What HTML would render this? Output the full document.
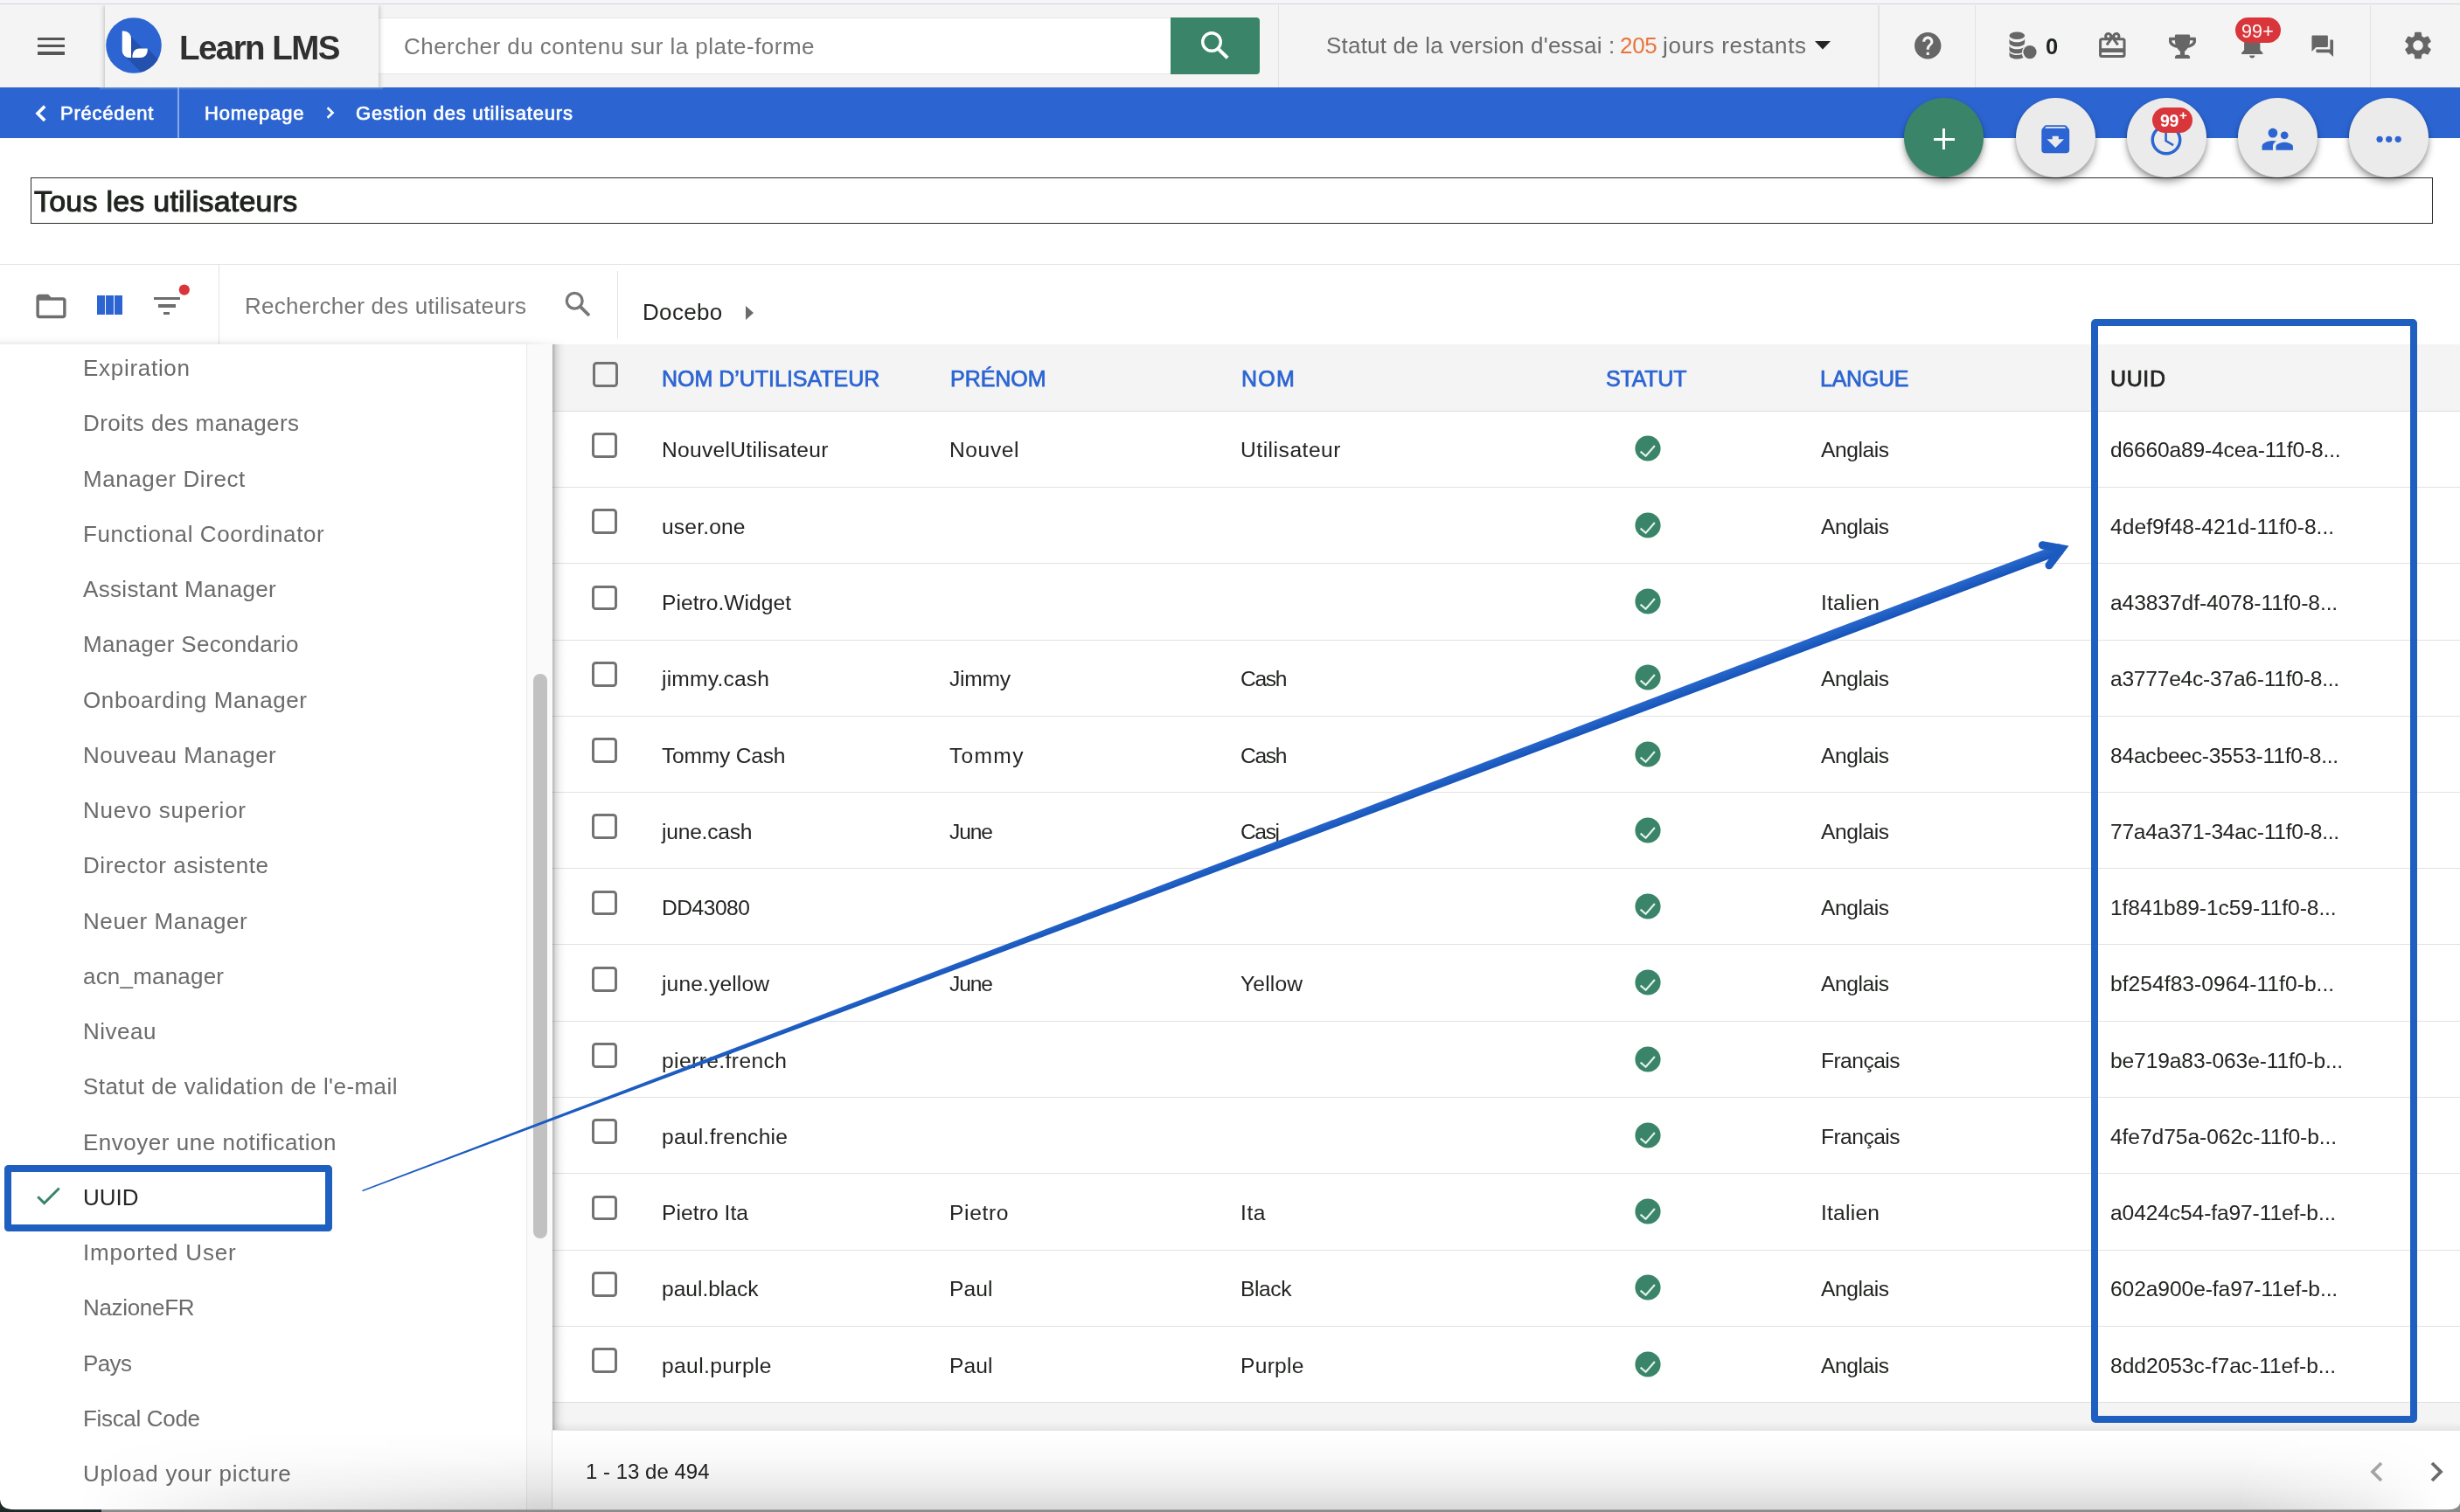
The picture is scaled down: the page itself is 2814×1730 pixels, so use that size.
<!DOCTYPE html>
<html><head><meta charset="utf-8"><title>Gestion des utilisateurs</title>
<style>
html,body{margin:0;padding:0;}
body{width:2814px;height:1730px;overflow:hidden;position:relative;background:#fff;font-family:"Liberation Sans", sans-serif;}
.t{will-change:transform;position:absolute;white-space:nowrap;font-family:"Liberation Sans", sans-serif;}
svg{display:block;overflow:visible;}
</style></head><body>

<div style="position:absolute;left:0.00px;top:0.00px;width:2814.00px;height:100.00px;background:#f4f4f4;"></div>
<div style="position:absolute;left:0.00px;top:0.00px;width:2814.00px;height:4.00px;background:#f5f5f8;"></div>
<div style="position:absolute;left:0.00px;top:4.00px;width:2814.00px;height:1.00px;background:#d4d4d8;"></div>
<div style="position:absolute;left:43.00px;top:42.50px;width:31.00px;height:3.60px;background:#555;"></div>
<div style="position:absolute;left:43.00px;top:50.80px;width:31.00px;height:3.60px;background:#555;"></div>
<div style="position:absolute;left:43.00px;top:59.10px;width:31.00px;height:3.60px;background:#555;"></div>
<div style="position:absolute;left:432.50px;top:21.00px;width:907.00px;height:62.80px;background:#fff;box-shadow:0 0 0 1px #e6e6e6;"></div>
<div style="position:absolute;left:100px;top:5.5px;width:360px;height:94.5px;overflow:hidden"><div style="position:absolute;left:19.5px;top:0;width:313px;height:110px;background:#f4f4f4;box-shadow:0 0 6px rgba(0,0,0,.30)"></div></div>
<svg style="position:absolute;left:121.00px;top:20.00px;" width="64.00" height="64.00" viewBox="0 0 64 64">
<defs><clipPath id="lc"><circle cx="32" cy="32" r="31.8"/></clipPath></defs>
<circle cx="32" cy="32" r="31.8" fill="#2c65d2"/>
<g clip-path="url(#lc)"><path d="M28 21 L42.4 35.4 L47.75 35.4 L87.75 75.4 L70.25 92.5 L20.25 42.5 Z" fill="#2451ad"/></g>
<path d="M18.75 15.4 H21 A8 8.6 0 0 1 29 24 V46 H26.75 A8 8 0 0 1 18.75 38 Z" fill="#fff"/>
<path d="M30.5 46 V43.4 A8 8 0 0 1 38.5 35.4 H47.75 V38 A8 8 0 0 1 39.75 46 Z" fill="#fff"/>
</svg>
<div class="t" style="left:204.60px;top:36px;font-size:38.5px;line-height:38px;font-weight:700;color:#303030;letter-spacing:-1.552px;">Learn LMS</div>
<div class="t" style="left:462.00px;top:40px;font-size:26px;line-height:26px;font-weight:400;color:#767676;letter-spacing:0.463px;">Chercher du contenu sur la plate-forme</div>
<div style="position:absolute;left:1339.00px;top:20.00px;width:102.00px;height:65.00px;background:#3a8569;border-radius:0 4px 4px 0;"></div>
<svg style="position:absolute;left:1371.00px;top:33.50px;" width="36.00" height="36.00" viewBox="0 0 36 36"><circle cx="15" cy="14" r="10.3" fill="none" stroke="#fff" stroke-width="3.4"/><path d="M22.3 21.6 L33.2 32.2" stroke="#fff" stroke-width="4" fill="none"/></svg>
<div style="position:absolute;left:1461.75px;top:5.50px;width:1.50px;height:94.50px;background:#e2e2e2;"></div>
<div style="position:absolute;left:2148.25px;top:5.50px;width:1.50px;height:94.50px;background:#e2e2e2;"></div>
<div style="position:absolute;left:2258.75px;top:5.50px;width:1.50px;height:94.50px;background:#e2e2e2;"></div>
<div style="position:absolute;left:2710.75px;top:5.50px;width:1.50px;height:94.50px;background:#e2e2e2;"></div>
<div class="t" style="left:1517.00px;top:39px;font-size:26px;line-height:26px;font-weight:400;color:#6b6b6b;letter-spacing:0.204px;">Statut de la version d&#39;essai :</div>
<div class="t" style="left:1853.00px;top:39px;font-size:26px;line-height:26px;font-weight:400;color:#e8743b;letter-spacing:-0.3px;">205</div>
<div class="t" style="left:1902.00px;top:39px;font-size:26px;line-height:26px;font-weight:400;color:#6b6b6b;letter-spacing:0.609px;">jours restants</div>
<svg style="position:absolute;left:2076.00px;top:47.00px;" width="18.00" height="9.50" viewBox="0 0 18 9.5"><path d="M0 0 H18 L9 9.5 Z" fill="#222522"/></svg>
<svg style="position:absolute;left:2186.75px;top:33.75px;" width="36.50" height="36.50" viewBox="0 0 24 24"><path fill="#666666" d="M12 2C6.48 2 2 6.48 2 12s4.48 10 10 10 10-4.48 10-10S17.52 2 12 2zm1 17h-2v-2h2v2zm2.07-7.75l-.9.92C13.45 12.9 13 13.5 13 15h-2v-.5c0-1.1.45-2.1 1.17-2.83l1.24-1.26c.37-.36.59-.86.59-1.41 0-1.1-.9-2-2-2s-2 .9-2 2H8c0-2.21 1.79-4 4-4s4 1.79 4 4c0 .88-.36 1.68-.93 2.25z"/></svg>
<svg style="position:absolute;left:2297.80px;top:35.80px;" width="32.00" height="32.00" viewBox="0 0 32 32">
<g fill="#666666">
<ellipse cx="9.3" cy="4.8" rx="8.8" ry="4.3"/>
<path d="M0.5 8 v5 c0 2.4 3.9 4.3 8.8 4.3 s8.8 -1.9 8.8 -4.3 v-5 c0 2.4 -3.9 4.3 -8.8 4.3 s-8.8 -1.9 -8.8 -4.3z"/>
<path d="M0.5 16 v5 c0 2.4 3.9 4.3 8.8 4.3 c2.2 0 4.2 -.4 5.8 -1 c-.3 -3 .9 -5.6 3 -7.3 v-1 c0 2.4 -3.9 4.3 -8.8 4.3 s-8.8 -1.9 -8.8 -4.3z"/>
<path d="M0.5 24 v3.2 c0 2.4 3.9 4.3 8.8 4.3 c3 0 5.6 -.7 7.2 -1.8 c-.9 -1 -1.4 -2.3 -1.6 -3.7 c-1.6 .6 -3.5 1 -5.6 1 c-4.9 0 -8.8 -1.9 -8.8 -4.3z"/>
<circle cx="24" cy="23.6" r="7.6"/>
</g></svg>
<div class="t" style="left:2339.80px;top:40px;font-size:25.5px;line-height:26px;font-weight:700;color:#1f231f;letter-spacing:0px;">0</div>
<svg style="position:absolute;left:2397.70px;top:34.10px;" width="36.60" height="36.60" viewBox="0 0 24 24"><path fill="#666666" d="M20 6h-2.18c.11-.31.18-.65.18-1 0-1.66-1.34-3-3-3-1.05 0-1.96.54-2.5 1.35l-.5.67-.5-.68C10.96 2.54 10.05 2 9 2 7.34 2 6 3.34 6 5c0 .35.07.69.18 1H4c-1.11 0-1.99.89-1.99 2L2 19c0 1.11.89 2 2 2h16c1.11 0 2-.89 2-2V8c0-1.11-.89-2-2-2zm-5-2c.55 0 1 .45 1 1s-.45 1-1 1-1-.45-1-1 .45-1 1-1zM9 4c.55 0 1 .45 1 1s-.45 1-1 1-1-.45-1-1 .45-1 1-1zm11 15H4v-2h16v2zm0-5H4V8h5.08L7 10.83 8.62 12 11 8.76l1-1.36 1 1.36L15.38 12 17 10.83 14.92 8H20v6z"/></svg>
<svg style="position:absolute;left:2480.60px;top:38.50px;" width="31.00" height="28.40" viewBox="0 0 576 512"><path fill="#666666" d="M552 64H448V24c0-13.3-10.7-24-24-24H152c-13.3 0-24 10.7-24 24v40H24C10.7 64 0 74.7 0 88v56c0 35.7 22.5 72.4 61.9 100.7 31.5 22.7 69.8 37.1 110 41.7C203.3 338.5 240 360 240 360v72h-48c-35.3 0-64 20.7-64 56v12c0 6.6 5.4 12 12 12h296c6.6 0 12-5.4 12-12v-12c0-35.3-28.7-56-64-56h-48v-72s36.7-21.5 68.1-73.6c40.3-4.6 78.6-19 110-41.7 39.3-28.3 61.9-65 61.9-100.7V88c0-13.3-10.7-24-24-24zM99.3 192.8C74.9 175.2 64 155.6 64 144v-16h64.2c1 32.6 5.8 61.2 12.8 86.200-15.100-5.200-29.200-12.400-41.700-21.400zM512 144c0 16.100-17.700 36.100-35.300 48.800-12.500 9-26.700 16.200-41.800 21.400 7-25 11.800-53.600 12.800-86.200H512v16z"/></svg>
<svg style="position:absolute;left:2557.75px;top:33.25px;" width="36.50" height="36.50" viewBox="0 0 24 24"><path fill="#666666" d="M12 22c1.1 0 2-.9 2-2h-4c0 1.1.89 2 2 2zm6-6v-5c0-3.07-1.64-5.64-4.5-6.32V4c0-.83-.67-1.5-1.5-1.5s-1.5.67-1.5 1.5v.68C7.63 5.36 6 7.92 6 11v5l-2 2v1h16v-1l-2-2z"/></svg>
<svg style="position:absolute;left:2641.55px;top:37.75px;" width="29.50" height="29.50" viewBox="0 0 24 24"><path fill="#666666" d="M21 6h-2v9H6v2c0 .55.45 1 1 1h11l4 4V7c0-.55-.45-1-1-1zm-4 6V3c0-.55-.45-1-1-1H3c-.55 0-1 .45-1 1v14l4-4h10c.55 0 1-.45 1-1z"/></svg>
<svg style="position:absolute;left:2747.00px;top:33.00px;" width="38.00" height="38.00" viewBox="0 0 24 24"><path fill="#666666" d="M19.14 12.94c.04-.3.06-.61.06-.94 0-.32-.02-.64-.07-.94l2.03-1.58c.18-.14.23-.41.12-.61l-1.92-3.32c-.12-.22-.37-.29-.59-.22l-2.39.96c-.5-.38-1.03-.7-1.62-.94l-.36-2.54c-.04-.24-.24-.41-.48-.41h-3.84c-.24 0-.43.17-.47.41l-.36 2.54c-.59.24-1.13.57-1.62.94l-2.39-.96c-.22-.08-.47 0-.59.22L2.74 8.87c-.12.21-.08.47.12.61l2.03 1.58c-.05.3-.09.63-.09.94s.02.64.07.94l-2.03 1.58c-.18.14-.23.41-.12.61l1.92 3.32c.12.22.37.29.59.22l2.39-.96c.5.38 1.03.7 1.62.94l.36 2.54c.05.24.24.41.48.41h3.84c.24 0 .44-.17.47-.41l.36-2.54c.59-.24 1.13-.56 1.62-.94l2.39.96c.22.08.47 0 .59-.22l1.92-3.32c.12-.22.07-.47-.12-.61l-2.01-1.58zM12 15.6c-1.98 0-3.6-1.62-3.6-3.6s1.62-3.6 3.6-3.6 3.6 1.62 3.6 3.6-1.62 3.6-3.6 3.6z"/></svg>
<div style="position:absolute;left:2557.00px;top:20.00px;width:52.00px;height:29.00px;background:#d9363c;border-radius:15px;"></div>
<div class="t" style="left:2564.00px;top:25px;font-size:21.5px;line-height:22px;font-weight:400;color:#fff;letter-spacing:0.15px;">99+</div>
<div style="position:absolute;left:0.00px;top:100.00px;width:2814.00px;height:57.60px;background:#2c65d2;"></div>
<div style="position:absolute;left:114.00px;top:100.00px;width:324.00px;height:2.50px;background:linear-gradient(rgba(210,210,210,.35),rgba(210,210,210,0));"></div>
<svg style="position:absolute;left:40.00px;top:119.50px;" width="13.50" height="19.50" viewBox="0 0 13.5 19.5"><path d="M11.2 1.6 L3 9.75 L11.2 17.9" fill="none" stroke="#fff" stroke-width="3.6"/></svg>
<div class="t" style="left:69.00px;top:119px;font-size:22px;line-height:22px;font-weight:400;color:#fff;letter-spacing:0.750px;-webkit-text-stroke:0.7px #fff;">Précédent</div>
<div style="position:absolute;left:203.00px;top:100.00px;width:2.00px;height:57.60px;background:#86a9e8;"></div>
<div class="t" style="left:234.30px;top:119px;font-size:22px;line-height:22px;font-weight:400;color:#fff;letter-spacing:0.837px;-webkit-text-stroke:0.7px #fff;">Homepage</div>
<svg style="position:absolute;left:372.50px;top:122.00px;" width="9.50" height="14.00" viewBox="0 0 9.5 14"><path d="M1.6 1.2 L7.6 7 L1.6 12.8" fill="none" stroke="#fff" stroke-width="2.6"/></svg>
<div class="t" style="left:407.00px;top:119px;font-size:22px;line-height:22px;font-weight:400;color:#fff;letter-spacing:0.840px;-webkit-text-stroke:0.7px #fff;">Gestion des utilisateurs</div>
<div style="position:absolute;left:35.00px;top:203.00px;width:2748.00px;height:52.60px;border:1.1px solid #2a2d2a;box-sizing:border-box;"></div>
<div class="t" style="left:39.00px;top:213px;font-size:34px;line-height:34px;font-weight:400;color:#20241f;letter-spacing:0.231px;-webkit-text-stroke:1.05px #20241f;">Tous les utilisateurs</div>
<div style="position:absolute;left:2178.20px;top:111.90px;width:90.80px;height:90.80px;background:#3a8569;border-radius:50%;box-shadow:0 6px 9px rgba(0,0,0,.30),0 2px 4px rgba(0,0,0,.18);"></div>
<div style="position:absolute;left:2306.10px;top:111.90px;width:90.80px;height:90.80px;background:#ebebeb;border-radius:50%;box-shadow:0 6px 9px rgba(0,0,0,.30),0 2px 4px rgba(0,0,0,.18);"></div>
<div style="position:absolute;left:2433.10px;top:111.90px;width:90.80px;height:90.80px;background:#ebebeb;border-radius:50%;box-shadow:0 6px 9px rgba(0,0,0,.30),0 2px 4px rgba(0,0,0,.18);"></div>
<div style="position:absolute;left:2560.00px;top:111.90px;width:90.80px;height:90.80px;background:#ebebeb;border-radius:50%;box-shadow:0 6px 9px rgba(0,0,0,.30),0 2px 4px rgba(0,0,0,.18);"></div>
<div style="position:absolute;left:2687.00px;top:111.90px;width:90.80px;height:90.80px;background:#ebebeb;border-radius:50%;box-shadow:0 6px 9px rgba(0,0,0,.30),0 2px 4px rgba(0,0,0,.18);"></div>
<div style="position:absolute;left:2212.00px;top:157.60px;width:23.60px;height:3.30px;background:#fff;"></div>
<div style="position:absolute;left:2222.10px;top:147.40px;width:3.30px;height:23.60px;background:#fff;"></div>
<svg style="position:absolute;left:2330.05px;top:137.75px;" width="42.50" height="42.50" viewBox="0 0 24 24"><path fill="#2c65d2" d="M20.54 5.23l-1.39-1.68C18.88 3.21 18.47 3 18 3H6c-.47 0-.88.21-1.16.55L3.46 5.23C3.17 5.57 3 6.02 3 6.5V19c0 1.1.9 2 2 2h14c1.1 0 2-.9 2-2V6.5c0-.48-.17-.93-.46-1.27zM12 17.5L6.5 12H10v-2h4v2h3.5L12 17.5zM5.12 5l.81-1h12l.94 1H5.12z"/></svg>
<svg style="position:absolute;left:2457.20px;top:138.80px;" width="42.00" height="42.00" viewBox="0 0 24 24"><path fill="#2c65d2" d="M11.99 2C6.47 2 2 6.48 2 12s4.47 10 9.99 10C17.52 22 22 17.52 22 12S17.52 2 11.99 2zM12 20c-4.42 0-8-3.58-8-8s3.58-8 8-8 8 3.58 8 8-3.58 8-8 8zm.5-13H11v6l5.25 3.15.75-1.23-4.5-2.67z"/></svg>
<svg style="position:absolute;left:2584.25px;top:138.25px;" width="42.50" height="42.50" viewBox="0 0 24 24"><path fill="#2c65d2" d="M16.5 12c1.38 0 2.49-1.12 2.49-2.5S17.88 7 16.5 7C15.12 7 14 8.12 14 9.5s1.12 2.5 2.5 2.5zM9 11c1.66 0 2.99-1.34 2.99-3S10.66 5 9 5C7.34 5 6 6.34 6 8s1.34 3 3 3zm7.5 3c-1.83 0-5.5.92-5.5 2.75V19h11v-2.25c0-1.83-3.67-2.75-5.5-2.75zM9 13c-2.33 0-7 1.17-7 3.5V19h7v-2.25c0-.85.33-2.34 2.37-3.47C10.5 13.1 9.66 13 9 13z"/></svg>
<svg style="position:absolute;left:2715.00px;top:152.00px;" width="36.00" height="15.00" viewBox="0 0 36 15"><g fill="#2c65d2"><circle cx="7.1" cy="7.3" r="3.6"/><circle cx="17.7" cy="7.3" r="3.6"/><circle cx="28.2" cy="7.3" r="3.6"/></g></svg>
<div style="position:absolute;left:2462.00px;top:123.00px;width:46.00px;height:29.00px;background:#d9363c;border-radius:15px;"></div>
<div class="t" style="left:2471.00px;top:128px;font-size:19.5px;line-height:20px;font-weight:700;color:#fff;letter-spacing:-0.4px;">99</div>
<div class="t" style="left:2493.30px;top:124px;font-size:15px;line-height:15px;font-weight:700;color:#fff;letter-spacing:0px;">+</div>
<div style="position:absolute;left:0.00px;top:301.60px;width:2814.00px;height:1.60px;background:#e3e3e3;"></div>
<svg style="position:absolute;left:37.50px;top:329.50px;" width="41.00" height="41.00" viewBox="0 0 24 24"><path fill="#6e6e6e" d="M20 6h-8l-2-2H4c-1.1 0-1.99.9-1.99 2L2 18c0 1.1.9 2 2 2h16c1.1 0 2-.9 2-2V8c0-1.1-.9-2-2-2zm0 12H4V8h16v10z"/></svg>
<div style="position:absolute;left:110.80px;top:338.20px;width:8.90px;height:21.80px;background:#2c65d2;"></div>
<div style="position:absolute;left:120.90px;top:338.20px;width:8.90px;height:21.80px;background:#2c65d2;"></div>
<div style="position:absolute;left:131.00px;top:338.20px;width:8.90px;height:21.80px;background:#2c65d2;"></div>
<div style="position:absolute;left:176.00px;top:340.00px;width:30.00px;height:3.20px;background:#6e6e6e;"></div>
<div style="position:absolute;left:181.00px;top:348.40px;width:20.00px;height:3.20px;background:#6e6e6e;"></div>
<div style="position:absolute;left:187.30px;top:357.00px;width:7.20px;height:3.20px;background:#6e6e6e;"></div>
<svg style="position:absolute;left:203.00px;top:324.00px;" width="16.00" height="16.00" viewBox="0 0 16 16"><circle cx="7.8" cy="7.6" r="6.1" fill="#d9363c"/></svg>
<div style="position:absolute;left:249.60px;top:303.00px;width:1.40px;height:91.00px;background:#e3e3e3;"></div>
<div class="t" style="left:280.00px;top:337px;font-size:26px;line-height:26px;font-weight:400;color:#767676;letter-spacing:0.267px;">Rechercher des utilisateurs</div>
<svg style="position:absolute;left:646.00px;top:333.00px;" width="30.00" height="30.00" viewBox="0 0 30 30"><circle cx="11.2" cy="11.2" r="8.9" fill="none" stroke="#777" stroke-width="3.3"/><path d="M17.6 17.6 L28 28" stroke="#777" stroke-width="3.8" fill="none"/></svg>
<div style="position:absolute;left:705.80px;top:310.00px;width:1.40px;height:77.00px;background:#e3e3e3;"></div>
<div class="t" style="left:735.00px;top:344px;font-size:26px;line-height:26px;font-weight:400;color:#222522;letter-spacing:0.335px;">Docebo</div>
<svg style="position:absolute;left:853.00px;top:350.00px;" width="9.00" height="16.00" viewBox="0 0 9 16"><path d="M0 0 L9 8 L0 16 Z" fill="#6b6b6b"/></svg>
<div style="position:absolute;left:0.00px;top:385.00px;width:660.00px;height:9.00px;background:linear-gradient(rgba(0,0,0,0),rgba(0,0,0,.015) 40%,rgba(0,0,0,.075));-webkit-mask-image:linear-gradient(90deg,#000 0,#000 600px,rgba(0,0,0,0) 650px);mask-image:linear-gradient(90deg,#000 0,#000 600px,rgba(0,0,0,0) 650px);"></div>
<div style="position:absolute;left:0.00px;top:394.00px;width:602.50px;height:1336.00px;background:#fff;"></div>
<div style="position:absolute;left:601.80px;top:394.00px;width:30.20px;height:1336.00px;background:#fafafa;border-left:1.6px solid #e9e9e9;box-sizing:border-box;"></div>
<div style="position:absolute;left:610.30px;top:771.00px;width:15.60px;height:646.00px;background:#c1c1c1;border-radius:8px;"></div>
<div class="t" style="left:95.00px;top:408px;font-size:26px;line-height:26px;font-weight:400;color:#6b6b6b;letter-spacing:0.708px;">Expiration</div>
<div class="t" style="left:95.00px;top:471px;font-size:26px;line-height:26px;font-weight:400;color:#6b6b6b;letter-spacing:0.395px;">Droits des managers</div>
<div class="t" style="left:95.00px;top:535px;font-size:26px;line-height:26px;font-weight:400;color:#6b6b6b;letter-spacing:0.578px;">Manager Direct</div>
<div class="t" style="left:95.00px;top:598px;font-size:26px;line-height:26px;font-weight:400;color:#6b6b6b;letter-spacing:0.605px;">Functional Coordinator</div>
<div class="t" style="left:95.00px;top:661px;font-size:26px;line-height:26px;font-weight:400;color:#6b6b6b;letter-spacing:0.339px;">Assistant Manager</div>
<div class="t" style="left:95.00px;top:724px;font-size:26px;line-height:26px;font-weight:400;color:#6b6b6b;letter-spacing:0.301px;">Manager Secondario</div>
<div class="t" style="left:95.00px;top:788px;font-size:26px;line-height:26px;font-weight:400;color:#6b6b6b;letter-spacing:0.605px;">Onboarding Manager</div>
<div class="t" style="left:95.00px;top:851px;font-size:26px;line-height:26px;font-weight:400;color:#6b6b6b;letter-spacing:0.488px;">Nouveau Manager</div>
<div class="t" style="left:95.00px;top:914px;font-size:26px;line-height:26px;font-weight:400;color:#6b6b6b;letter-spacing:0.745px;">Nuevo superior</div>
<div class="t" style="left:95.00px;top:977px;font-size:26px;line-height:26px;font-weight:400;color:#6b6b6b;letter-spacing:0.570px;">Director asistente</div>
<div class="t" style="left:95.00px;top:1041px;font-size:26px;line-height:26px;font-weight:400;color:#6b6b6b;letter-spacing:0.591px;">Neuer Manager</div>
<div class="t" style="left:95.00px;top:1104px;font-size:26px;line-height:26px;font-weight:400;color:#6b6b6b;letter-spacing:0.200px;">acn_manager</div>
<div class="t" style="left:95.00px;top:1167px;font-size:26px;line-height:26px;font-weight:400;color:#6b6b6b;letter-spacing:0.512px;">Niveau</div>
<div class="t" style="left:95.00px;top:1230px;font-size:26px;line-height:26px;font-weight:400;color:#6b6b6b;letter-spacing:0.433px;">Statut de validation de l&#39;e-mail</div>
<div class="t" style="left:95.00px;top:1294px;font-size:26px;line-height:26px;font-weight:400;color:#6b6b6b;letter-spacing:0.521px;">Envoyer une notification</div>
<div class="t" style="left:95.00px;top:1357px;font-size:26px;line-height:26px;font-weight:400;color:#222522;letter-spacing:-0.021px;">UUID</div>
<div class="t" style="left:95.00px;top:1420px;font-size:26px;line-height:26px;font-weight:400;color:#6b6b6b;letter-spacing:0.835px;">Imported User</div>
<div class="t" style="left:95.00px;top:1483px;font-size:26px;line-height:26px;font-weight:400;color:#6b6b6b;letter-spacing:-0.320px;">NazioneFR</div>
<div class="t" style="left:95.00px;top:1547px;font-size:26px;line-height:26px;font-weight:400;color:#6b6b6b;letter-spacing:-0.604px;">Pays</div>
<div class="t" style="left:95.00px;top:1610px;font-size:26px;line-height:26px;font-weight:400;color:#6b6b6b;letter-spacing:-0.328px;">Fiscal Code</div>
<div class="t" style="left:95.00px;top:1673px;font-size:26px;line-height:26px;font-weight:400;color:#6b6b6b;letter-spacing:0.682px;">Upload your picture</div>
<div style="position:absolute;left:632.00px;top:394.00px;width:2182.00px;height:76.50px;background:#f4f4f4;"></div>
<div style="position:absolute;left:632.00px;top:470.00px;width:2182.00px;height:1.00px;background:#dedede;"></div>
<div style="position:absolute;left:678.20px;top:414.30px;width:28.60px;height:28.60px;border:3.3px solid #737373;border-radius:4.5px;box-sizing:border-box;background:transparent;"></div>
<div class="t" style="left:757.00px;top:421px;font-size:25px;line-height:25px;font-weight:400;color:#2c65d2;letter-spacing:-0.016px;-webkit-text-stroke:0.75px #2c65d2;">NOM D’UTILISATEUR</div>
<div class="t" style="left:1087.00px;top:421px;font-size:25px;line-height:25px;font-weight:400;color:#2c65d2;letter-spacing:-0.047px;-webkit-text-stroke:0.75px #2c65d2;">PRÉNOM</div>
<div class="t" style="left:1420.00px;top:421px;font-size:25px;line-height:25px;font-weight:400;color:#2c65d2;letter-spacing:1.300px;-webkit-text-stroke:0.75px #2c65d2;">NOM</div>
<div class="t" style="left:1837.00px;top:421px;font-size:25px;line-height:25px;font-weight:400;color:#2c65d2;letter-spacing:-0.203px;-webkit-text-stroke:0.75px #2c65d2;">STATUT</div>
<div class="t" style="left:2082.00px;top:421px;font-size:25px;line-height:25px;font-weight:400;color:#2c65d2;letter-spacing:-0.263px;-webkit-text-stroke:0.75px #2c65d2;">LANGUE</div>
<div class="t" style="left:2414.00px;top:421px;font-size:25px;line-height:25px;font-weight:400;color:#222522;letter-spacing:0.630px;-webkit-text-stroke:0.75px #222522;">UUID</div>
<div style="position:absolute;left:677.10px;top:495.20px;width:28.60px;height:28.60px;border:3.3px solid #737373;border-radius:4.5px;box-sizing:border-box;background:#fff;"></div>
<div class="t" style="left:757.00px;top:502px;font-size:24.6px;line-height:25px;font-weight:400;color:#222522;letter-spacing:0.287px;">NouvelUtilisateur</div>
<div class="t" style="left:1086.00px;top:502px;font-size:24.6px;line-height:25px;font-weight:400;color:#222522;letter-spacing:0.588px;">Nouvel</div>
<div class="t" style="left:1419.00px;top:502px;font-size:24.6px;line-height:25px;font-weight:400;color:#222522;letter-spacing:0.516px;">Utilisateur</div>
<svg style="position:absolute;left:1868.50px;top:497.20px;" width="32.00" height="32.00" viewBox="0 0 32 32"><circle cx="16" cy="16" r="14.6" fill="#3a8569"/><path d="M7.6 19.6 L13.6 24.8 L23.9 13" fill="none" stroke="#e6f1ec" stroke-width="2.1"/></svg>
<div class="t" style="left:2083.00px;top:502px;font-size:24.6px;line-height:25px;font-weight:400;color:#222522;letter-spacing:-0.445px;">Anglais</div>
<div class="t" style="left:2414.00px;top:502px;font-size:24.6px;line-height:25px;font-weight:400;color:#222522;letter-spacing:-0.175px;">d6660a89-4cea-11f0-8...</div>
<div style="position:absolute;left:632.00px;top:557.00px;width:2182.00px;height:1.00px;background:#e2e2e2;"></div>
<div style="position:absolute;left:677.10px;top:582.45px;width:28.60px;height:28.60px;border:3.3px solid #737373;border-radius:4.5px;box-sizing:border-box;background:#fff;"></div>
<div class="t" style="left:757.00px;top:590px;font-size:24.6px;line-height:25px;font-weight:400;color:#222522;letter-spacing:0.163px;">user.one</div>
<svg style="position:absolute;left:1868.50px;top:584.95px;" width="32.00" height="32.00" viewBox="0 0 32 32"><circle cx="16" cy="16" r="14.6" fill="#3a8569"/><path d="M7.6 19.6 L13.6 24.8 L23.9 13" fill="none" stroke="#e6f1ec" stroke-width="2.1"/></svg>
<div class="t" style="left:2083.00px;top:590px;font-size:24.6px;line-height:25px;font-weight:400;color:#222522;letter-spacing:-0.445px;">Anglais</div>
<div class="t" style="left:2414.00px;top:590px;font-size:24.6px;line-height:25px;font-weight:400;color:#222522;letter-spacing:0.044px;">4def9f48-421d-11f0-8...</div>
<div style="position:absolute;left:632.00px;top:644.00px;width:2182.00px;height:1.00px;background:#e2e2e2;"></div>
<div style="position:absolute;left:677.10px;top:669.70px;width:28.60px;height:28.60px;border:3.3px solid #737373;border-radius:4.5px;box-sizing:border-box;background:#fff;"></div>
<div class="t" style="left:757.00px;top:677px;font-size:24.6px;line-height:25px;font-weight:400;color:#222522;letter-spacing:0.031px;">Pietro.Widget</div>
<svg style="position:absolute;left:1868.50px;top:672.20px;" width="32.00" height="32.00" viewBox="0 0 32 32"><circle cx="16" cy="16" r="14.6" fill="#3a8569"/><path d="M7.6 19.6 L13.6 24.8 L23.9 13" fill="none" stroke="#e6f1ec" stroke-width="2.1"/></svg>
<div class="t" style="left:2083.00px;top:677px;font-size:24.6px;line-height:25px;font-weight:400;color:#222522;letter-spacing:0.227px;">Italien</div>
<div class="t" style="left:2414.00px;top:677px;font-size:24.6px;line-height:25px;font-weight:400;color:#222522;letter-spacing:-0.085px;">a43837df-4078-11f0-8...</div>
<div style="position:absolute;left:632.00px;top:732.00px;width:2182.00px;height:1.00px;background:#e2e2e2;"></div>
<div style="position:absolute;left:677.10px;top:756.95px;width:28.60px;height:28.60px;border:3.3px solid #737373;border-radius:4.5px;box-sizing:border-box;background:#fff;"></div>
<div class="t" style="left:757.00px;top:764px;font-size:24.6px;line-height:25px;font-weight:400;color:#222522;letter-spacing:0.205px;">jimmy.cash</div>
<div class="t" style="left:1086.00px;top:764px;font-size:24.6px;line-height:25px;font-weight:400;color:#222522;letter-spacing:-0.262px;">Jimmy</div>
<div class="t" style="left:1419.00px;top:764px;font-size:24.6px;line-height:25px;font-weight:400;color:#222522;letter-spacing:-1.307px;">Cash</div>
<svg style="position:absolute;left:1868.50px;top:759.45px;" width="32.00" height="32.00" viewBox="0 0 32 32"><circle cx="16" cy="16" r="14.6" fill="#3a8569"/><path d="M7.6 19.6 L13.6 24.8 L23.9 13" fill="none" stroke="#e6f1ec" stroke-width="2.1"/></svg>
<div class="t" style="left:2083.00px;top:764px;font-size:24.6px;line-height:25px;font-weight:400;color:#222522;letter-spacing:-0.445px;">Anglais</div>
<div class="t" style="left:2414.00px;top:764px;font-size:24.6px;line-height:25px;font-weight:400;color:#222522;letter-spacing:-0.243px;">a3777e4c-37a6-11f0-8...</div>
<div style="position:absolute;left:632.00px;top:819.00px;width:2182.00px;height:1.00px;background:#e2e2e2;"></div>
<div style="position:absolute;left:677.10px;top:844.20px;width:28.60px;height:28.60px;border:3.3px solid #737373;border-radius:4.5px;box-sizing:border-box;background:#fff;"></div>
<div class="t" style="left:757.00px;top:852px;font-size:24.6px;line-height:25px;font-weight:400;color:#222522;letter-spacing:-0.222px;">Tommy Cash</div>
<div class="t" style="left:1086.00px;top:852px;font-size:24.6px;line-height:25px;font-weight:400;color:#222522;letter-spacing:1.300px;">Tommy</div>
<div class="t" style="left:1419.00px;top:852px;font-size:24.6px;line-height:25px;font-weight:400;color:#222522;letter-spacing:-1.307px;">Cash</div>
<svg style="position:absolute;left:1868.50px;top:846.70px;" width="32.00" height="32.00" viewBox="0 0 32 32"><circle cx="16" cy="16" r="14.6" fill="#3a8569"/><path d="M7.6 19.6 L13.6 24.8 L23.9 13" fill="none" stroke="#e6f1ec" stroke-width="2.1"/></svg>
<div class="t" style="left:2083.00px;top:852px;font-size:24.6px;line-height:25px;font-weight:400;color:#222522;letter-spacing:-0.445px;">Anglais</div>
<div class="t" style="left:2414.00px;top:852px;font-size:24.6px;line-height:25px;font-weight:400;color:#222522;letter-spacing:-0.226px;">84acbeec-3553-11f0-8...</div>
<div style="position:absolute;left:632.00px;top:906.00px;width:2182.00px;height:1.00px;background:#e2e2e2;"></div>
<div style="position:absolute;left:677.10px;top:931.45px;width:28.60px;height:28.60px;border:3.3px solid #737373;border-radius:4.5px;box-sizing:border-box;background:#fff;"></div>
<div class="t" style="left:757.00px;top:939px;font-size:24.6px;line-height:25px;font-weight:400;color:#222522;letter-spacing:-0.223px;">june.cash</div>
<div class="t" style="left:1086.00px;top:939px;font-size:24.6px;line-height:25px;font-weight:400;color:#222522;letter-spacing:-1.115px;">June</div>
<div class="t" style="left:1419.00px;top:939px;font-size:24.6px;line-height:25px;font-weight:400;color:#222522;letter-spacing:-1.401px;">Casj</div>
<svg style="position:absolute;left:1868.50px;top:933.95px;" width="32.00" height="32.00" viewBox="0 0 32 32"><circle cx="16" cy="16" r="14.6" fill="#3a8569"/><path d="M7.6 19.6 L13.6 24.8 L23.9 13" fill="none" stroke="#e6f1ec" stroke-width="2.1"/></svg>
<div class="t" style="left:2083.00px;top:939px;font-size:24.6px;line-height:25px;font-weight:400;color:#222522;letter-spacing:-0.445px;">Anglais</div>
<div class="t" style="left:2414.00px;top:939px;font-size:24.6px;line-height:25px;font-weight:400;color:#222522;letter-spacing:-0.243px;">77a4a371-34ac-11f0-8...</div>
<div style="position:absolute;left:632.00px;top:993.00px;width:2182.00px;height:1.00px;background:#e2e2e2;"></div>
<div style="position:absolute;left:677.10px;top:1018.70px;width:28.60px;height:28.60px;border:3.3px solid #737373;border-radius:4.5px;box-sizing:border-box;background:#fff;"></div>
<div class="t" style="left:757.00px;top:1026px;font-size:24.6px;line-height:25px;font-weight:400;color:#222522;letter-spacing:-0.487px;">DD43080</div>
<svg style="position:absolute;left:1868.50px;top:1021.20px;" width="32.00" height="32.00" viewBox="0 0 32 32"><circle cx="16" cy="16" r="14.6" fill="#3a8569"/><path d="M7.6 19.6 L13.6 24.8 L23.9 13" fill="none" stroke="#e6f1ec" stroke-width="2.1"/></svg>
<div class="t" style="left:2083.00px;top:1026px;font-size:24.6px;line-height:25px;font-weight:400;color:#222522;letter-spacing:-0.445px;">Anglais</div>
<div class="t" style="left:2414.00px;top:1026px;font-size:24.6px;line-height:25px;font-weight:400;color:#222522;letter-spacing:-0.091px;">1f841b89-1c59-11f0-8...</div>
<div style="position:absolute;left:632.00px;top:1080.00px;width:2182.00px;height:1.00px;background:#e2e2e2;"></div>
<div style="position:absolute;left:677.10px;top:1105.95px;width:28.60px;height:28.60px;border:3.3px solid #737373;border-radius:4.5px;box-sizing:border-box;background:#fff;"></div>
<div class="t" style="left:757.00px;top:1113px;font-size:24.6px;line-height:25px;font-weight:400;color:#222522;letter-spacing:0.133px;">june.yellow</div>
<div class="t" style="left:1086.00px;top:1113px;font-size:24.6px;line-height:25px;font-weight:400;color:#222522;letter-spacing:-1.115px;">June</div>
<div class="t" style="left:1419.00px;top:1113px;font-size:24.6px;line-height:25px;font-weight:400;color:#222522;letter-spacing:0.159px;">Yellow</div>
<svg style="position:absolute;left:1868.50px;top:1108.45px;" width="32.00" height="32.00" viewBox="0 0 32 32"><circle cx="16" cy="16" r="14.6" fill="#3a8569"/><path d="M7.6 19.6 L13.6 24.8 L23.9 13" fill="none" stroke="#e6f1ec" stroke-width="2.1"/></svg>
<div class="t" style="left:2083.00px;top:1113px;font-size:24.6px;line-height:25px;font-weight:400;color:#222522;letter-spacing:-0.445px;">Anglais</div>
<div class="t" style="left:2414.00px;top:1113px;font-size:24.6px;line-height:25px;font-weight:400;color:#222522;letter-spacing:0.044px;">bf254f83-0964-11f0-b...</div>
<div style="position:absolute;left:632.00px;top:1168.00px;width:2182.00px;height:1.00px;background:#e2e2e2;"></div>
<div style="position:absolute;left:677.10px;top:1193.20px;width:28.60px;height:28.60px;border:3.3px solid #737373;border-radius:4.5px;box-sizing:border-box;background:#fff;"></div>
<div class="t" style="left:757.00px;top:1201px;font-size:24.6px;line-height:25px;font-weight:400;color:#222522;letter-spacing:0.410px;">pierre.french</div>
<svg style="position:absolute;left:1868.50px;top:1195.70px;" width="32.00" height="32.00" viewBox="0 0 32 32"><circle cx="16" cy="16" r="14.6" fill="#3a8569"/><path d="M7.6 19.6 L13.6 24.8 L23.9 13" fill="none" stroke="#e6f1ec" stroke-width="2.1"/></svg>
<div class="t" style="left:2083.00px;top:1201px;font-size:24.6px;line-height:25px;font-weight:400;color:#222522;letter-spacing:-0.545px;">Français</div>
<div class="t" style="left:2414.00px;top:1201px;font-size:24.6px;line-height:25px;font-weight:400;color:#222522;letter-spacing:-0.124px;">be719a83-063e-11f0-b...</div>
<div style="position:absolute;left:632.00px;top:1255.00px;width:2182.00px;height:1.00px;background:#e2e2e2;"></div>
<div style="position:absolute;left:677.10px;top:1280.45px;width:28.60px;height:28.60px;border:3.3px solid #737373;border-radius:4.5px;box-sizing:border-box;background:#fff;"></div>
<div class="t" style="left:757.00px;top:1288px;font-size:24.6px;line-height:25px;font-weight:400;color:#222522;letter-spacing:0.264px;">paul.frenchie</div>
<svg style="position:absolute;left:1868.50px;top:1282.95px;" width="32.00" height="32.00" viewBox="0 0 32 32"><circle cx="16" cy="16" r="14.6" fill="#3a8569"/><path d="M7.6 19.6 L13.6 24.8 L23.9 13" fill="none" stroke="#e6f1ec" stroke-width="2.1"/></svg>
<div class="t" style="left:2083.00px;top:1288px;font-size:24.6px;line-height:25px;font-weight:400;color:#222522;letter-spacing:-0.545px;">Français</div>
<div class="t" style="left:2414.00px;top:1288px;font-size:24.6px;line-height:25px;font-weight:400;color:#222522;letter-spacing:-0.068px;">4fe7d75a-062c-11f0-b...</div>
<div style="position:absolute;left:632.00px;top:1342.00px;width:2182.00px;height:1.00px;background:#e2e2e2;"></div>
<div style="position:absolute;left:677.10px;top:1367.70px;width:28.60px;height:28.60px;border:3.3px solid #737373;border-radius:4.5px;box-sizing:border-box;background:#fff;"></div>
<div class="t" style="left:757.00px;top:1375px;font-size:24.6px;line-height:25px;font-weight:400;color:#222522;letter-spacing:0.062px;">Pietro Ita</div>
<div class="t" style="left:1086.00px;top:1375px;font-size:24.6px;line-height:25px;font-weight:400;color:#222522;letter-spacing:0.650px;">Pietro</div>
<div class="t" style="left:1419.00px;top:1375px;font-size:24.6px;line-height:25px;font-weight:400;color:#222522;letter-spacing:0.578px;">Ita</div>
<svg style="position:absolute;left:1868.50px;top:1370.20px;" width="32.00" height="32.00" viewBox="0 0 32 32"><circle cx="16" cy="16" r="14.6" fill="#3a8569"/><path d="M7.6 19.6 L13.6 24.8 L23.9 13" fill="none" stroke="#e6f1ec" stroke-width="2.1"/></svg>
<div class="t" style="left:2083.00px;top:1375px;font-size:24.6px;line-height:25px;font-weight:400;color:#222522;letter-spacing:0.227px;">Italien</div>
<div class="t" style="left:2414.00px;top:1375px;font-size:24.6px;line-height:25px;font-weight:400;color:#222522;letter-spacing:-0.114px;">a0424c54-fa97-11ef-b...</div>
<div style="position:absolute;left:632.00px;top:1430.00px;width:2182.00px;height:1.00px;background:#e2e2e2;"></div>
<div style="position:absolute;left:677.10px;top:1454.95px;width:28.60px;height:28.60px;border:3.3px solid #737373;border-radius:4.5px;box-sizing:border-box;background:#fff;"></div>
<div class="t" style="left:757.00px;top:1462px;font-size:24.6px;line-height:25px;font-weight:400;color:#222522;letter-spacing:-0.028px;">paul.black</div>
<div class="t" style="left:1086.00px;top:1462px;font-size:24.6px;line-height:25px;font-weight:400;color:#222522;letter-spacing:0.089px;">Paul</div>
<div class="t" style="left:1419.00px;top:1462px;font-size:24.6px;line-height:25px;font-weight:400;color:#222522;letter-spacing:-0.410px;">Black</div>
<svg style="position:absolute;left:1868.50px;top:1457.45px;" width="32.00" height="32.00" viewBox="0 0 32 32"><circle cx="16" cy="16" r="14.6" fill="#3a8569"/><path d="M7.6 19.6 L13.6 24.8 L23.9 13" fill="none" stroke="#e6f1ec" stroke-width="2.1"/></svg>
<div class="t" style="left:2083.00px;top:1462px;font-size:24.6px;line-height:25px;font-weight:400;color:#222522;letter-spacing:-0.445px;">Anglais</div>
<div class="t" style="left:2414.00px;top:1462px;font-size:24.6px;line-height:25px;font-weight:400;color:#222522;letter-spacing:-0.085px;">602a900e-fa97-11ef-b...</div>
<div style="position:absolute;left:632.00px;top:1517.00px;width:2182.00px;height:1.00px;background:#e2e2e2;"></div>
<div style="position:absolute;left:677.10px;top:1542.20px;width:28.60px;height:28.60px;border:3.3px solid #737373;border-radius:4.5px;box-sizing:border-box;background:#fff;"></div>
<div class="t" style="left:757.00px;top:1550px;font-size:24.6px;line-height:25px;font-weight:400;color:#222522;letter-spacing:0.380px;">paul.purple</div>
<div class="t" style="left:1086.00px;top:1550px;font-size:24.6px;line-height:25px;font-weight:400;color:#222522;letter-spacing:0.089px;">Paul</div>
<div class="t" style="left:1419.00px;top:1550px;font-size:24.6px;line-height:25px;font-weight:400;color:#222522;letter-spacing:0.281px;">Purple</div>
<svg style="position:absolute;left:1868.50px;top:1544.70px;" width="32.00" height="32.00" viewBox="0 0 32 32"><circle cx="16" cy="16" r="14.6" fill="#3a8569"/><path d="M7.6 19.6 L13.6 24.8 L23.9 13" fill="none" stroke="#e6f1ec" stroke-width="2.1"/></svg>
<div class="t" style="left:2083.00px;top:1550px;font-size:24.6px;line-height:25px;font-weight:400;color:#222522;letter-spacing:-0.445px;">Anglais</div>
<div class="t" style="left:2414.00px;top:1550px;font-size:24.6px;line-height:25px;font-weight:400;color:#222522;letter-spacing:-0.051px;">8dd2053c-f7ac-11ef-b...</div>
<div style="position:absolute;left:632.00px;top:1604.00px;width:2182.00px;height:1.00px;background:#dedede;"></div>
<div style="position:absolute;left:632.00px;top:1605.00px;width:2182.00px;height:31.50px;background:linear-gradient(#f4f4f4 0,#f4f4f4 70%,#e4e4e4 100%);"></div>
<div style="position:absolute;left:632.00px;top:394.00px;width:15.00px;height:1241.75px;background:linear-gradient(90deg,rgba(0,0,0,.30),rgba(0,0,0,.13) 25%,rgba(0,0,0,.04) 60%,rgba(0,0,0,0));"></div>
<div class="t" style="left:669.50px;top:1672px;font-size:24px;line-height:24px;font-weight:400;color:#222522;letter-spacing:0.004px;">1 - 13 de 494</div>
<div style="position:absolute;left:631.30px;top:1636.00px;width:1.20px;height:91.50px;background:#e0e0e0;"></div>
<svg style="position:absolute;left:2710.00px;top:1672.00px;" width="17.00" height="24.00" viewBox="0 0 17 24"><path d="M14 2 L4 12 L14 22" fill="none" stroke="#a8a8a8" stroke-width="3.8"/></svg>
<svg style="position:absolute;left:2779.00px;top:1672.00px;" width="17.00" height="24.00" viewBox="0 0 17 24"><path d="M3 2 L13 12 L3 22" fill="none" stroke="#6b6b6b" stroke-width="3.8"/></svg>
<div style="position:absolute;left:0.00px;top:1640.00px;width:2814.00px;height:87.00px;background:linear-gradient(rgba(0,0,0,0) 0,rgba(0,0,0,.025) 35%,rgba(0,0,0,.075) 70%,rgba(0,0,0,.15) 100%);-webkit-mask-image:linear-gradient(90deg,rgba(0,0,0,0) 0,rgba(0,0,0,0) 90px,rgba(0,0,0,.55) 300px,#000 620px,#000 2560px,rgba(0,0,0,.5) 2700px,rgba(0,0,0,0) 2795px);mask-image:linear-gradient(90deg,rgba(0,0,0,0) 0,rgba(0,0,0,0) 90px,rgba(0,0,0,.55) 300px,#000 620px,#000 2560px,rgba(0,0,0,.5) 2700px,rgba(0,0,0,0) 2795px);pointer-events:none;"></div>
<svg style="position:absolute;left:0;top:1700px" width="2814" height="30" viewBox="0 1700 2814 30">
<path d="M0 1716 Q1 1727.3 16 1727.3 L2800 1727.3 Q2813 1727 2814 1719 L2814 1730 L0 1730 Z" fill="#8b8b8b"/>
<path d="M0 1716 Q1 1727.3 16 1727.3 L116 1727.3 L116 1730 L0 1730 Z" fill="#1c2a2a"/>
</svg>
<div style="position:absolute;left:5.00px;top:1333.00px;width:375.00px;height:76.30px;border:8.1px solid #1f5fbf;border-radius:4.5px;box-sizing:border-box;"></div>
<svg style="position:absolute;left:36.65px;top:1350.35px;" width="36.30" height="36.30" viewBox="0 0 24 24"><path fill="#3a8569" d="M9 16.17L4.83 12l-1.42 1.41L9 19 21 7l-1.41-1.41z"/></svg>
<div style="position:absolute;left:2392.00px;top:365.00px;width:373.20px;height:1263.20px;border:8px solid #1f5fbf;border-radius:5px;box-sizing:border-box;"></div>
<svg style="position:absolute;left:0;top:0" width="2814" height="1730" viewBox="0 0 2814 1730">
<defs><linearGradient id="ag" gradientUnits="userSpaceOnUse" x1="412.2" y1="1356.4" x2="416.8" y2="1368.6"><stop offset="0" stop-color="#2866cc"/><stop offset=".55" stop-color="#1b5abf"/><stop offset="1" stop-color="#1450b3"/></linearGradient></defs>
<polygon points="414.3,1361.8 999.0,1138.4 1298.7,1024.2 1606.4,907.0 2097.9,719.8 2356.0,622.1 2360.3,633.5 2102.1,731.0 1609.6,915.7 1301.3,1031.3 1001.0,1143.9 414.7,1363.2" fill="url(#ag)"/>
<path d="M2336.3 623.7 L2358.5 627.7 L2344.0 646.8" fill="none" stroke="#1b5abf" stroke-width="9" stroke-linejoin="miter" stroke-miterlimit="10" stroke-linecap="round"/>
</svg>
</body></html>
